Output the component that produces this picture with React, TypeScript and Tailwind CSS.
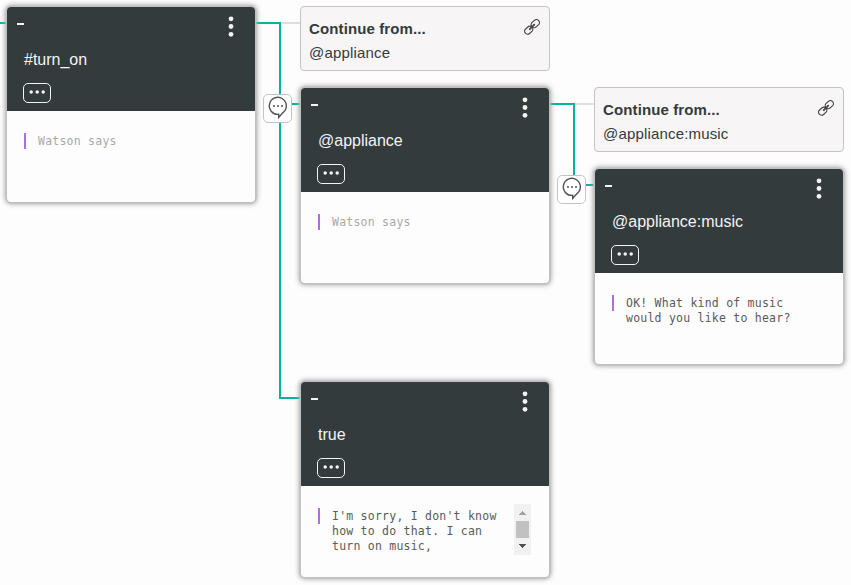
import type { ReactNode } from "react";

function Ellipsis() {
  return (
    <div className="h-5 w-7 rounded-[5px] border border-[#f4f4f4]">
      <svg className="h-[18px] w-[26px]" viewBox="0 0 26 18" fill="#f4f4f4">
        <circle cx="7.2" cy="8" r="1.75" />
        <circle cx="13.2" cy="8" r="1.75" />
        <circle cx="19.2" cy="8" r="1.75" />
      </svg>
    </div>
  );
}

function Kebab() {
  return (
    <svg className="h-6 w-[6px]" viewBox="0 0 6 24" fill="#f4f4f4">
      <circle cx="3" cy="2.8" r="2.4" />
      <circle cx="3" cy="10.5" r="2.4" />
      <circle cx="3" cy="18.3" r="2.4" />
    </svg>
  );
}

function Scrollbar() {
  return (
    <div className="-mt-1 flex h-[51px] w-[17px] flex-col items-center bg-[#f1f1f1]">
      <svg className="h-[17px] w-[17px]" viewBox="0 0 17 17" shapeRendering="crispEdges">
        <path d="M5 11v-1h1v-1h1v-1h1v-1h1v1h1v1h1v1h1v1z" fill="#a3a3a3" />
      </svg>
      <div className="h-[17px] w-[13px] bg-[#c1c1c1]" />
      <svg className="h-[17px] w-[17px]" viewBox="0 0 17 17" shapeRendering="crispEdges">
        <path d="M5 6v1h1v1h1v1h1v1h1v-1h1v-1h1v-1h1v-1z" fill="#505050" />
      </svg>
    </div>
  );
}

type NodeProps = {
  place: string;
  title: string;
  muted?: boolean;
  scroll?: boolean;
  children: ReactNode;
};

function DialogNode({ place, title, muted, scroll, children }: NodeProps) {
  return (
    <section
      className={`absolute h-[195px] w-[248px] overflow-hidden rounded-[4px] bg-[#fdfdfd] shadow-[0_0_0_1.5px_#c0c0c0,0_0_5px_2px_#a4a4a4] ${place}`}
    >
      <header className="flex h-[104px] flex-col bg-[#333b3c] pl-4 text-[#f4f4f4]">
        <div className="-ml-[6px] flex h-[35px] items-start justify-between pr-[21px] pt-[9px]">
          <span className="mt-[7px] h-[2px] w-[7px] bg-[#f4f4f4]" />
          <Kebab />
        </div>
        <h2 className="ml-px h-[41px] text-base leading-[35px]">{title}</h2>
        <Ellipsis />
      </header>
      <div className="flex pl-[17px] pt-[22px]">
        <span className="h-4 w-[2px] bg-[#ad6fdc]" />
        <p
          className={`ml-3 w-[182px] whitespace-pre-line pt-px font-['DejaVu_Sans_Mono',monospace] text-[11.5px] leading-[15px] tracking-[0.23px] ${
            muted ? "text-[#aaa9a5]" : "text-[#5a5a5a]"
          }`}
        >
          {children}
        </p>
        {scroll && <Scrollbar />}
      </div>
    </section>
  );
}

function ContinueCard({ place, target }: { place: string; target: string }) {
  return (
    <aside
      className={`absolute flex h-[65px] w-[250px] justify-between rounded-[4px] border border-[#c4c4c4] bg-[#f7f5f6] pl-2 pr-[9px] pt-[10px] ${place}`}
    >
      <div className="text-[15px] leading-6 tracking-[0.17px] text-[#333b3c]">
        <p className="font-bold tracking-[0.12px]">Continue from...</p>
        <p>{target}</p>
      </div>
      <svg
        className="mt-[2px] size-4"
        viewBox="0 0 16 16"
        fill="none"
        stroke="#45474b"
        strokeWidth="1.2"
        strokeLinecap="round"
      >
        <rect x="-4.5" y="-3" width="9" height="6" rx="3" transform="translate(11.3 4.6) rotate(-42)" />
        <rect x="-4.5" y="-3" width="9" height="6" rx="3" transform="translate(4.7 11.2) rotate(-42)" />
        <path d="M5.8 10.1l4.4-4.4" strokeWidth="1.9" />
      </svg>
    </aside>
  );
}

function ChatBadge({ place }: { place: string }) {
  return (
    <div className={`absolute size-[29px] rounded-[5px] border border-[#c4c4c4] bg-white ${place}`}>
      <svg className="size-[27px]" viewBox="0 0 27 27" fill="none" stroke="#505256" strokeWidth="1.4">
        <path d="M14.7 19.3A8.5 8.5 0 1 1 19 17.6L14.7 22.4z" strokeLinejoin="miter" />
        <g fill="#505256" stroke="none">
          <circle cx="10" cy="11" r="1" />
          <circle cx="14" cy="11" r="1" />
          <circle cx="18" cy="11" r="1" />
        </g>
      </svg>
    </div>
  );
}

function Connectors() {
  return (
    <svg className="absolute inset-0 h-[585px] w-[851px]" viewBox="0 0 851 585" fill="none" strokeWidth="2">
      <path d="M281 23h20M575 104h20" stroke="#dedede" />
      <path d="M0 23h7M255 23h25v375h21M280 104h21M549 104h25v81h21" stroke="#00b4a0" />
    </svg>
  );
}

export default function App() {
  return (
    <main className="relative h-[585px] w-[851px] overflow-hidden bg-[#fdfdfd] font-['Liberation_Sans',Arial,sans-serif]">
      <Connectors />
      <DialogNode place="left-[7px] top-[7px]" title="#turn_on" muted>
        Watson says
      </DialogNode>
      <ContinueCard place="left-[300px] top-[6px]" target="@appliance" />
      <DialogNode place="left-[301px] top-[88px]" title="@appliance" muted>
        Watson says
      </DialogNode>
      <ContinueCard place="left-[594px] top-[87px]" target="@appliance:music" />
      <DialogNode place="left-[595px] top-[169px]" title="@appliance:music">
        {"OK! What kind of music\nwould you like to hear?"}
      </DialogNode>
      <DialogNode place="left-[301px] top-[382px]" title="true" scroll>
        {"I'm sorry, I don't know\nhow to do that. I can\nturn on music,"}
      </DialogNode>
      <ChatBadge place="left-[263px] top-[94px]" />
      <ChatBadge place="left-[557px] top-[175px]" />
    </main>
  );
}
